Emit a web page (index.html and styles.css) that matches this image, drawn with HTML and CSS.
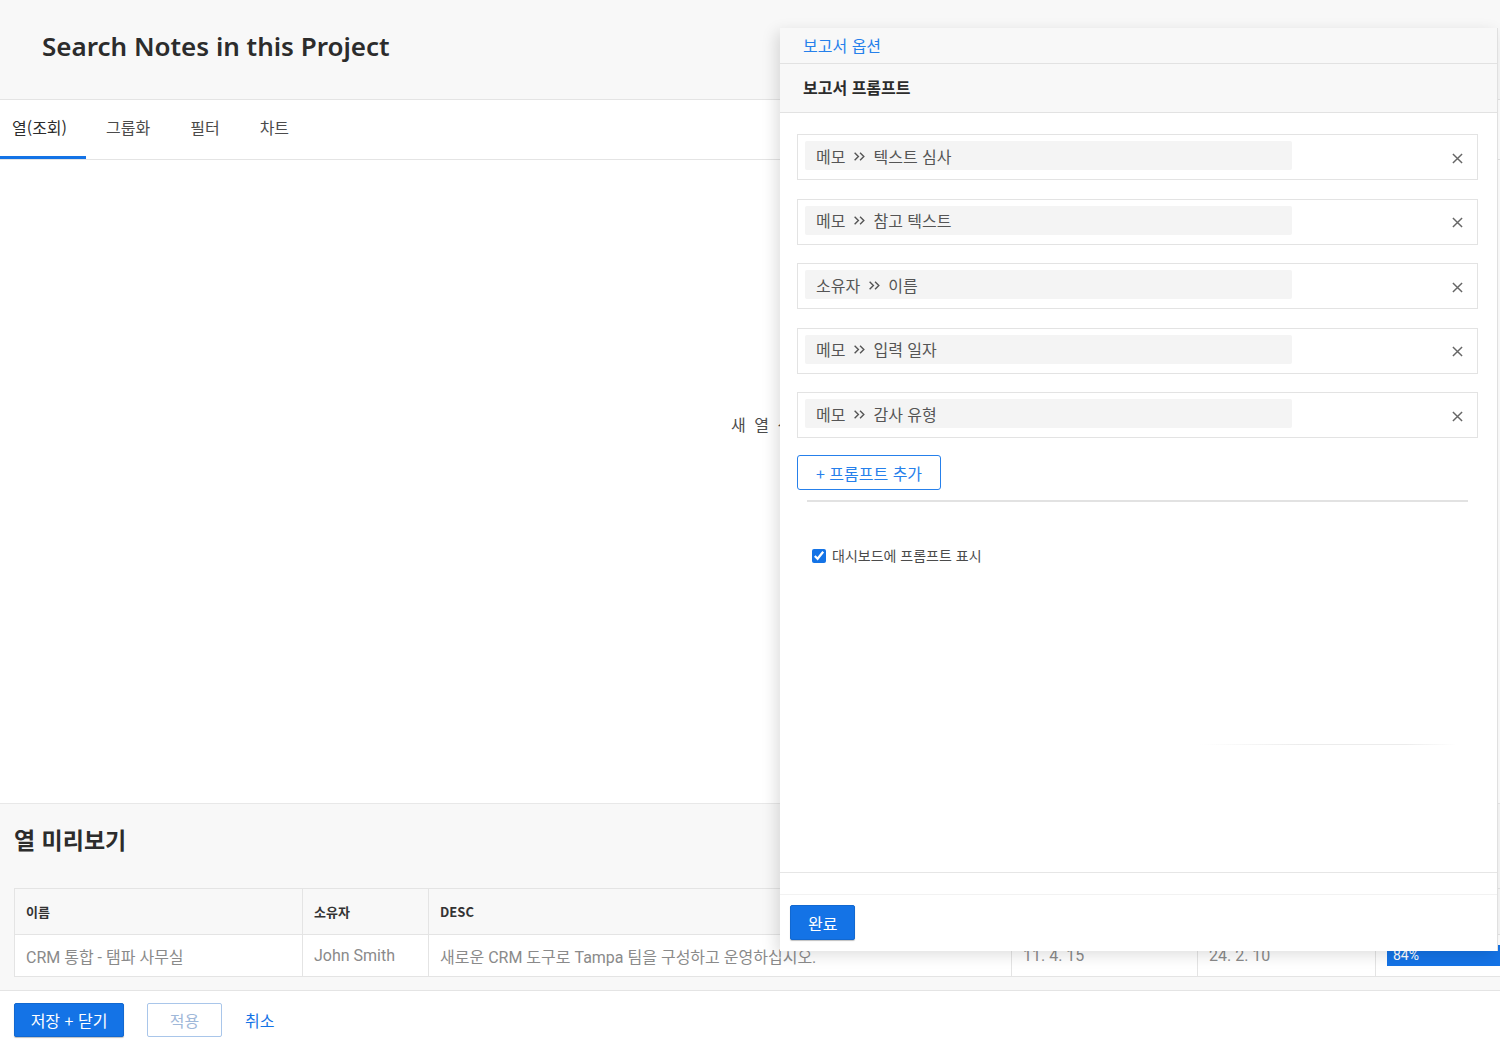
FILE: index.html
```html
<!DOCTYPE html>
<html lang="ko">
<head>
<meta charset="utf-8">
<title>Search Notes in this Project</title>
<link rel="stylesheet" href="styles.css">
</head>
<body>
<div class="page">
  <header class="page-header">
    <h1 class="page-title">Search Notes in this Project</h1>
  </header>
  <nav class="tabs">
    <div class="tab tab-active">열(조회)</div>
    <div class="tab">그룹화</div>
    <div class="tab">필터</div>
    <div class="tab">차트</div>
  </nav>
  <main class="main">
    <div class="main-hint">새 열 선택</div>
  </main>
  <section class="preview">
    <h2 class="preview-title">열 미리보기</h2>
    <div class="ptable">
      <div class="prow phead">
        <div class="pcell">이름</div>
        <div class="pcell">소유자</div>
        <div class="pcell">DESC</div>
        <div class="pcell">입력 일자</div>
        <div class="pcell">수정 일자</div>
        <div class="pcell">진행률</div>
      </div>
      <div class="prow pdata">
        <div class="pcell">CRM 통합 - 탬파 사무실</div>
        <div class="pcell">John Smith</div>
        <div class="pcell">새로운 CRM 도구로 Tampa 팀을 구성하고 운영하십시오.</div>
        <div class="pcell">11. 4. 15</div>
        <div class="pcell">24. 2. 10</div>
        <div class="pcell"><div class="pbar">84%</div></div>
      </div>
    </div>
  </section>
  <footer class="page-footer">
    <button class="btn btn-primary btn-save">저장 + 닫기</button>
    <button class="btn btn-outline-muted">적용</button>
    <button class="btn btn-link">취소</button>
  </footer>
</div>

<aside class="panel">
  <div class="panel-head">보고서 옵션</div>
  <div class="panel-section">보고서 프롬프트</div>
  <div class="panel-body">
    <div class="prompt-list">
      <div class="prompt">
        <div class="pill"><span>메모</span><svg class="chev" viewBox="0 0 12 12"><path d="M1.5 2.5l3.5 3.5-3.5 3.5M6.5 2.5l3.5 3.5-3.5 3.5"/></svg><span>텍스트 심사</span></div>
        <svg class="close" viewBox="0 0 12 12"><path d="M1 1l10 10M11 1L1 11"/></svg>
      </div>
      <div class="prompt">
        <div class="pill"><span>메모</span><svg class="chev" viewBox="0 0 12 12"><path d="M1.5 2.5l3.5 3.5-3.5 3.5M6.5 2.5l3.5 3.5-3.5 3.5"/></svg><span>참고 텍스트</span></div>
        <svg class="close" viewBox="0 0 12 12"><path d="M1 1l10 10M11 1L1 11"/></svg>
      </div>
      <div class="prompt">
        <div class="pill"><span>소유자</span><svg class="chev" viewBox="0 0 12 12"><path d="M1.5 2.5l3.5 3.5-3.5 3.5M6.5 2.5l3.5 3.5-3.5 3.5"/></svg><span>이름</span></div>
        <svg class="close" viewBox="0 0 12 12"><path d="M1 1l10 10M11 1L1 11"/></svg>
      </div>
      <div class="prompt">
        <div class="pill"><span>메모</span><svg class="chev" viewBox="0 0 12 12"><path d="M1.5 2.5l3.5 3.5-3.5 3.5M6.5 2.5l3.5 3.5-3.5 3.5"/></svg><span>입력 일자</span></div>
        <svg class="close" viewBox="0 0 12 12"><path d="M1 1l10 10M11 1L1 11"/></svg>
      </div>
      <div class="prompt">
        <div class="pill"><span>메모</span><svg class="chev" viewBox="0 0 12 12"><path d="M1.5 2.5l3.5 3.5-3.5 3.5M6.5 2.5l3.5 3.5-3.5 3.5"/></svg><span>감사 유형</span></div>
        <svg class="close" viewBox="0 0 12 12"><path d="M1 1l10 10M11 1L1 11"/></svg>
      </div>
    </div>
    <button class="btn-add">+ 프롬프트 추가</button>
    <div class="divider"></div>
    <label class="check">
      <input type="checkbox" checked>
      <span>대시보드에 프롬프트 표시</span>
    </label>
    <div class="ghost-line"></div>
  </div>
  <div class="panel-gap"></div>
  <div class="panel-foot">
    <button class="btn btn-primary btn-done">완료</button>
  </div>
</aside>
</body>
</html>
```

FILE: styles.css
```css
* { box-sizing: border-box; }

html, body {
  margin: 0;
  padding: 0;
  width: 1500px;
  height: 1048px;
  overflow: hidden;
  background: #ffffff;
  font-family: "Noto Sans CJK KR", "Noto Sans", sans-serif;
  color: #2c2c2c;
}

.page {
  display: flex;
  flex-direction: column;
  height: 1048px;
}

.page-header {
  height: 100px;
  background: #f8f8f8;
  border-bottom: 1px solid #e4e4e4;
  padding: 26px 0 0 42px;
}

.page-title {
  margin: 0;
  font-family: "Noto Sans", "Noto Sans CJK KR", sans-serif;
  font-weight: 600;
  font-size: 26px;
  line-height: 40px;
  color: #2c2c2c;
}

.tabs {
  display: flex;
  height: 60px;
  border-bottom: 1px solid #e4e4e4;
}

.tab {
  height: 59px;
  line-height: 55px;
  font-size: 16px;
  color: #4b4b4b;
  padding: 0 20px;
}

.tab-active {
  color: #2c2c2c;
  width: 86px;
  padding: 0 12px;
  border-bottom: 3px solid #1473e6;
}

.main {
  flex: 1;
  padding: 252px 0 0 731px;
}

.main-hint {
  font-size: 16px;
  color: #4b4b4b;
  letter-spacing: 2px;
  white-space: nowrap;
}

.preview {
  height: 188px;
  background: #f8f8f8;
  border-top: 1px solid #e8e8e8;
  border-bottom: 1px solid #e4e4e4;
  padding: 17px 0 0 14px;
  overflow: hidden;
}

.preview-title {
  margin: 0;
  font-size: 23px;
  font-weight: 700;
  line-height: 36px;
  color: #2c2c2c;
}

.ptable {
  margin-top: 31px;
  border: 1px solid #e4e4e4;
  border-right: none;
  background: #fff;
}

.prow {
  display: grid;
  grid-template-columns: 288px 126px 583px 186px 178px 1fr;
}

.phead {
  height: 46px;
  background: #f8f8f8;
  border-bottom: 1px solid #e4e4e4;
}

.pdata {
  height: 41px;
  background: #fff;
}

.pcell {
  border-right: 1px solid #e4e4e4;
  padding: 0 11px;
  display: flex;
  align-items: center;
  white-space: nowrap;
  overflow: hidden;
}

.pcell:last-child { border-right: none; padding-right: 0; }

.phead .pcell {
  font-size: 13px;
  font-weight: 700;
  color: #333;
}

.pdata .pcell {
  font-family: "Roboto", "Noto Sans CJK KR", sans-serif;
  font-size: 16px;
  color: #8a8a8a;
}

.pbar {
  width: 100%;
  height: 21px;
  background: #1473e6;
  color: #fff;
  font-size: 14px;
  line-height: 21px;
  padding-left: 6px;
}

.page-footer {
  height: 57px;
  display: flex;
  align-items: flex-start;
  padding: 12px 0 0 14px;
}

.btn {
  font-family: "Noto Sans CJK KR", "Noto Sans", sans-serif;
  font-size: 16px;
  height: 34px;
  border-radius: 2px;
  cursor: pointer;
}

.btn-primary {
  background: #1473e6;
  color: #fff;
  border: 1px solid #1268d0;
  padding: 0 17px;
  box-shadow: 0 1px 1px rgba(0,0,0,0.25);
}

.btn-save {
  width: 110px;
  padding: 0;
}

.btn-outline-muted {
  margin-left: 23px;
  width: 75px;
  background: #fff;
  color: #9fb8d9;
  border: 1px solid #a9c6ea;
}

.btn-link {
  margin-left: 11px;
  background: transparent;
  border: none;
  color: #1473e6;
  padding: 0 12px;
}

/* Side panel overlay */
.panel {
  position: absolute;
  left: 780px;
  top: 28px;
  width: 718px;
  height: 923px;
  background: #fff;
  border-right: 1px solid #e0e0e0;
  box-shadow: -4px 4px 14px rgba(0, 0, 0, 0.13);
  display: flex;
  flex-direction: column;
}

.panel-head {
  height: 36px;
  flex: none;
  background: #f8f8f8;
  border-bottom: 1px solid #e2e2e2;
  padding-left: 23px;
  font-size: 16px;
  line-height: 34px;
  color: #2680eb;
}

.panel-section {
  height: 49px;
  flex: none;
  background: #f8f8f8;
  border-bottom: 1px solid #e2e2e2;
  padding-left: 23px;
  font-size: 16px;
  font-weight: 700;
  line-height: 46px;
  color: #2c2c2c;
}

.panel-body {
  flex: 1;
  padding: 21px 19px 0 17px;
  border-bottom: 1px solid #e6e6e6;
  position: relative;
}

.prompt-list {
  display: flex;
  flex-direction: column;
  gap: 18.5px;
}

.prompt {
  height: 46px;
  border: 1px solid #e3e3e3;
  display: flex;
  align-items: center;
  justify-content: space-between;
  padding: 0 14px 0 7px;
}

.pill {
  width: 487px;
  height: 29px;
  margin-top: -3px;
  background: #f4f4f4;
  border-radius: 2px;
  display: flex;
  align-items: center;
  padding-left: 11px;
  font-size: 16px;
  color: #555;
}

.chev {
  width: 13px;
  height: 13px;
  margin: 1px 7px 0 8px;
  fill: none;
  stroke: #555;
  stroke-width: 1.3;
}

.close {
  width: 11px;
  height: 11px;
  fill: none;
  stroke: #666;
  stroke-width: 1.6;
  margin-top: 2px;
}

.btn-add {
  margin-top: 17px;
  height: 35px;
  width: 144px;
  border: 1px solid #2680eb;
  border-radius: 3px;
  background: #fff;
  color: #2680eb;
  font-family: "Noto Sans CJK KR", "Noto Sans", sans-serif;
  font-size: 16px;
  padding: 0;
  display: block;
}

.divider {
  margin: 10px 10px 0 10px;
  height: 2px;
  background: #e2e2e2;
}

.check {
  display: flex;
  align-items: center;
  margin: 43px 0 0 15px;
  font-size: 14px;
  color: #4b4b4b;
}

.check input {
  accent-color: #1473e6;
  width: 14px;
  height: 14px;
  margin: 1px 6px 0 0;
}

.ghost-line {
  position: absolute;
  left: 420px;
  right: 40px;
  top: 631px;
  height: 1px;
  background: linear-gradient(90deg, rgba(230,230,230,0), #ececec 40%, #ececec 80%, rgba(230,230,230,0));
}

.panel-gap {
  height: 22px;
  flex: none;
  border-bottom: 1px solid #f2f2f2;
}

.panel-foot {
  height: 56px;
  flex: none;
  padding: 10px 0 0 10px;
}

.btn-done {
  height: 35px;
  padding: 0 17px;
}
```
